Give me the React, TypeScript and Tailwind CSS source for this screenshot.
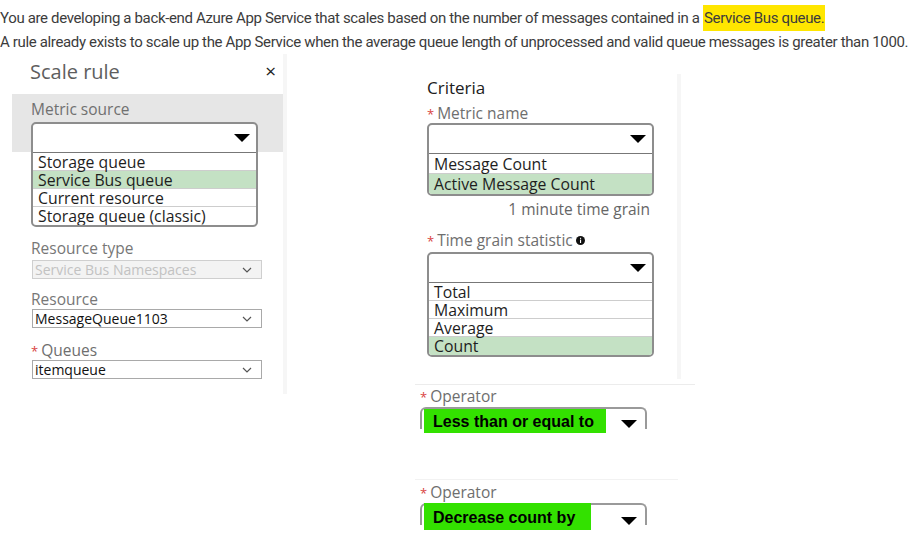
import React from 'react';

const ui = "font-['Open_Sans','Noto_Sans',sans-serif]";

const Triangle: React.FC = () => (
  <div className="w-0 h-0 border-l-[8px] border-r-[8px] border-t-[8px] border-l-transparent border-r-transparent border-t-black" />
);

const Chevron: React.FC = () => (
  <svg width="10" height="6" viewBox="0 0 10 6" className="shrink-0">
    <path d="M1 1l4 4 4-4" fill="none" stroke="#555" strokeWidth="1.2" />
  </svg>
);

const InfoDot: React.FC = () => (
  <svg width="9" height="9" viewBox="0 0 9 9" className="ml-[3px] inline-block">
    <circle cx="4.5" cy="4.5" r="4.5" fill="#111" />
    <rect x="4" y="3.6" width="1.1" height="3.4" fill="#fff" />
    <rect x="4" y="1.8" width="1.1" height="1.1" fill="#fff" />
  </svg>
);

const Req: React.FC<{ children: React.ReactNode }> = ({ children }) => (
  <div className="text-[15.5px] leading-[16px] text-[#6e6e6e]">
    <span className="text-[#d9443f] text-[13px] mr-[3px]">*</span>
    {children}
  </div>
);

type DropProps = { options: string[]; selected: string; rowH: string };

const DropList: React.FC<DropProps> = ({ options, selected, rowH }) => (
  <div className="w-[227px] rounded-[5px] border-2 border-[#8d8d8d] overflow-hidden bg-white">
    <div className="h-[29px] flex items-center justify-end pr-[6px] border-b border-[#777]">
      <Triangle />
    </div>
    {options.map((o, i) => (
      <div
        key={o}
        className={`${rowH} flex items-center pl-[5px] text-[15.8px] leading-[14px] text-[#1e1e1e] ${
          o === selected ? 'bg-[#c4e1c4]' : ''
        } ${i < options.length - 1 ? 'border-b border-[#cdcdcd]' : ''}`}
      >
        {o}
      </div>
    ))}
  </div>
);

const SimpleSelect: React.FC<{ value: string; disabled?: boolean }> = ({ value, disabled }) => (
  <div
    className={`w-[230px] h-[19px] ml-[1px] flex items-center justify-between pl-[2px] pr-[9px] border text-[14px] leading-none ${
      disabled ? 'bg-[#f3f3f3] border-[#cfcfcf] text-[#c2c2c2]' : 'bg-white border-[#a9a9a9] text-[#111]'
    }`}
  >
    <span>{value}</span>
    <Chevron />
  </div>
);

const OperatorSnippet: React.FC<{ value: string; greenW: string; green: string; triTop: string }> = ({
  value,
  greenW,
  green,
  triTop,
}) => (
  <div className="pl-[5px]">
    <Req>Operator</Req>
    <div className="mt-[2px] w-[227px] h-[22px] border-2 border-b-0 border-[#9a9a9a] rounded-t-[6px] flex justify-between">
      <div
        className={`${greenW} ${green} ml-[2px] bg-[#33e100] pl-[9px] pt-[2px] flex items-center font-['Liberation_Sans',Arial,sans-serif] font-bold text-[16px] text-black leading-none`}
      >
        {value}
      </div>
      <div className={`${triTop} mr-[8px]`}>
        <Triangle />
      </div>
    </div>
  </div>
);

export default function App() {
  return (
    <div className="w-[917px] h-[543px] bg-white overflow-hidden">
      <div className="pt-[6px] font-['Roboto',sans-serif] text-[15px] leading-[24px] tracking-[-0.35px] text-[#3c3c3c] whitespace-nowrap">
        <div>
          You are developing a back-end Azure App Service that scales based on the number of messages contained in a{' '}
          <span className="bg-[#ffe600] px-[1px] py-[4px]">Service Bus queue.</span>
        </div>
        <div>
          A rule already exists to scale up the App Service when the average queue length of unprocessed and valid
          queue messages is greater than 1000.
        </div>
      </div>

      <div className={`flex items-start ${ui}`}>
        {/* Left: scale rule panel */}
        <div className="ml-[12px] w-[271px] h-[340px] mt-[1px]">
          <div className="h-[39px] flex items-center justify-between pl-[18px] pr-[7px] pb-[6px]">
            <span className="text-[20px] text-[#5e5e5e]">Scale rule</span>
            <span className="text-[19px] text-[#222]">×</span>
          </div>
          <div className="pl-[19px] pt-[8px] bg-[linear-gradient(to_bottom,#e6e6e6_58px,#ffffff_58px)]">
            <div className="text-[15.5px] leading-[15px] text-[#707070]">Metric source</div>
            <div className="mt-[5px]">
              <DropList
                rowH="h-[18px]"
                selected="Service Bus queue"
                options={['Storage queue', 'Service Bus queue', 'Current resource', 'Storage queue (classic)']}
              />
            </div>
            <div className="mt-[13px] text-[15.5px] leading-[16px] text-[#777]">Resource type</div>
            <div className="mt-[4px]">
              <SimpleSelect value="Service Bus Namespaces" disabled />
            </div>
            <div className="mt-[12px] text-[15.5px] leading-[16px] text-[#777]">Resource</div>
            <div className="mt-[2px]">
              <SimpleSelect value="MessageQueue1103" />
            </div>
            <div className="mt-[14px]">
              <Req>Queues</Req>
            </div>
            <div className="mt-[1px]">
              <SimpleSelect value="itemqueue" />
            </div>
          </div>
        </div>
        <div className="w-[4px] h-[340px] bg-[#f6f6f6]" />

        {/* Right: criteria */}
        <div className="ml-[128px] mt-[20px]">
          <div className="flex">
            <div className="w-[262px] h-[305px] pl-[12px] pt-[3px]">
              <div className="text-[17px] leading-[22px] text-[#202020]">Criteria</div>
              <div className="mt-[6px]">
                <Req>Metric name</Req>
              </div>
              <div className="mt-[1px]">
                <DropList rowH="h-[20px]" selected="Active Message Count" options={['Message Count', 'Active Message Count']} />
              </div>
              <div className="w-[227px] mt-[3px] pr-[4px] text-right text-[15.5px] leading-[20px] text-[#666]">
                1 minute time grain
              </div>
              <div className="mt-[13px] flex items-center">
                <Req>Time grain statistic</Req>
                <InfoDot />
              </div>
              <div className="mt-[3px]">
                <DropList rowH="h-[18px]" selected="Count" options={['Total', 'Maximum', 'Average', 'Count']} />
              </div>
            </div>
            <div className="w-[4px] h-[305px] bg-[#f6f6f6]" />
          </div>
          <div className="mt-[5px] w-[280px] h-px bg-[#ececec]" />
          <div className="mt-[3px]">
            <OperatorSnippet value="Less than or equal to" greenW="w-[182px]" green="h-[24px]" triTop="mt-[11px]" />
          </div>
          <div className="mt-[50px] w-[263px] h-px bg-[#f2f2f2]" />
          <div className="mt-[4px]">
            <OperatorSnippet value="Decrease count by" greenW="w-[167px]" green="h-[27px] -mt-[2px]" triTop="mt-[12px]" />
          </div>
        </div>
      </div>
    </div>
  );
}
